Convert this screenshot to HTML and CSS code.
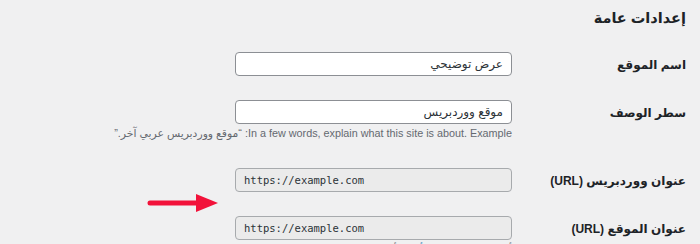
FILE: index.html
```html
<!DOCTYPE html>
<html lang="ar" dir="rtl">

<head>
    <meta charset="UTF-8">
    <meta name="viewport" content="width=device-width, initial-scale=1.0">
    <title>إعدادات عامة</title>
    <link rel="stylesheet" href="styles.css">
</head>

<body>
    <div class="wrap">
        <h1>إعدادات عامة</h1>
        <div class="form-table">
            <div class="row">
                <label class="label" for="blogname">اسم الموقع</label>
                <div class="field">
                    <input class="text" id="blogname" type="text" value="عرض توضيحي">
                </div>
            </div>
            <div class="row">
                <label class="label" for="blogdescription">سطر الوصف</label>
                <div class="field">
                    <input class="text" id="blogdescription" type="text" value="موقع ووردبريس">
                    <p class="description">In a few words, explain what this site is about. Example: “موقع ووردبريس عربي آخر.”</p>
                </div>
            </div>
            <div class="row">
                <label class="label" for="siteurl">عنوان ووردبريس (URL)</label>
                <div class="field">
                    <input class="text code" id="siteurl" type="url" value="https://example.com" dir="ltr" readonly>
                </div>
            </div>
            <div class="row">
                <label class="label" for="home">عنوان الموقع (URL)</label>
                <div class="field">
                    <input class="text code" id="home" type="url" value="https://example.com" dir="ltr" readonly>
                    <p class="description">أدخل العنوان هنا <a href="#">إذا أردت</a> أن تكون الصفحة الرئيسية لموقعك مختلفة.</p>
                </div>
            </div>
        </div>
    </div>
    <svg class="arrow" width="74" height="22" viewBox="0 0 74 22">
        <line x1="3" y1="11" x2="52" y2="11" stroke="#f2123a" stroke-width="5" stroke-linecap="round" />
        <polygon points="49,2 71,11 49,20" fill="#f2123a" />
    </svg>
</body>

</html>
```

FILE: styles.css
```css
body {
    background-color: #f0f0f1;
    color: #1d2327;
    font-family: 'Liberation Sans', 'DejaVu Sans', sans-serif;
    margin: 0;
    padding: 0;
    overflow: hidden;
    height: 244px;
    position: relative;
}

.wrap {
    padding: 0 14px 0 0;
}

h1 {
    font-size: 14.5px;
    font-weight: 700;
    line-height: 22px;
    margin: 7px 0 11px;
}

.row {
    display: grid;
    grid-template-columns: 174px 277px;
    align-items: start;
    padding: 12px 0 11px;
}

.label {
    font-size: 12px;
    font-weight: 700;
    line-height: 24px;
    padding-top: 1px;
}

.text {
    display: block;
    box-sizing: border-box;
    width: 277px;
    height: 24px;
    margin: 0;
    padding: 0 8px;
    border: 1px solid #8c8f94;
    border-radius: 4px;
    background: #fff;
    color: #2c3338;
    font-family: 'Liberation Sans', 'DejaVu Sans', sans-serif;
    font-size: 12px;
}

.text.code {
    background: #ebebeb;
    border-color: #a7aaad;
    font-family: 'DejaVu Sans Mono', monospace;
    font-size: 10.5px;
    text-align: left;
}

.description {
    margin: 1px 0 4px;
    width: 400px;
    font-size: 10.8px;
    line-height: 16px;
    color: #646970;
    white-space: nowrap;
}

.description a {
    color: #2271b1;
}

.arrow {
    position: absolute;
    left: 147px;
    top: 192px;
}
```
